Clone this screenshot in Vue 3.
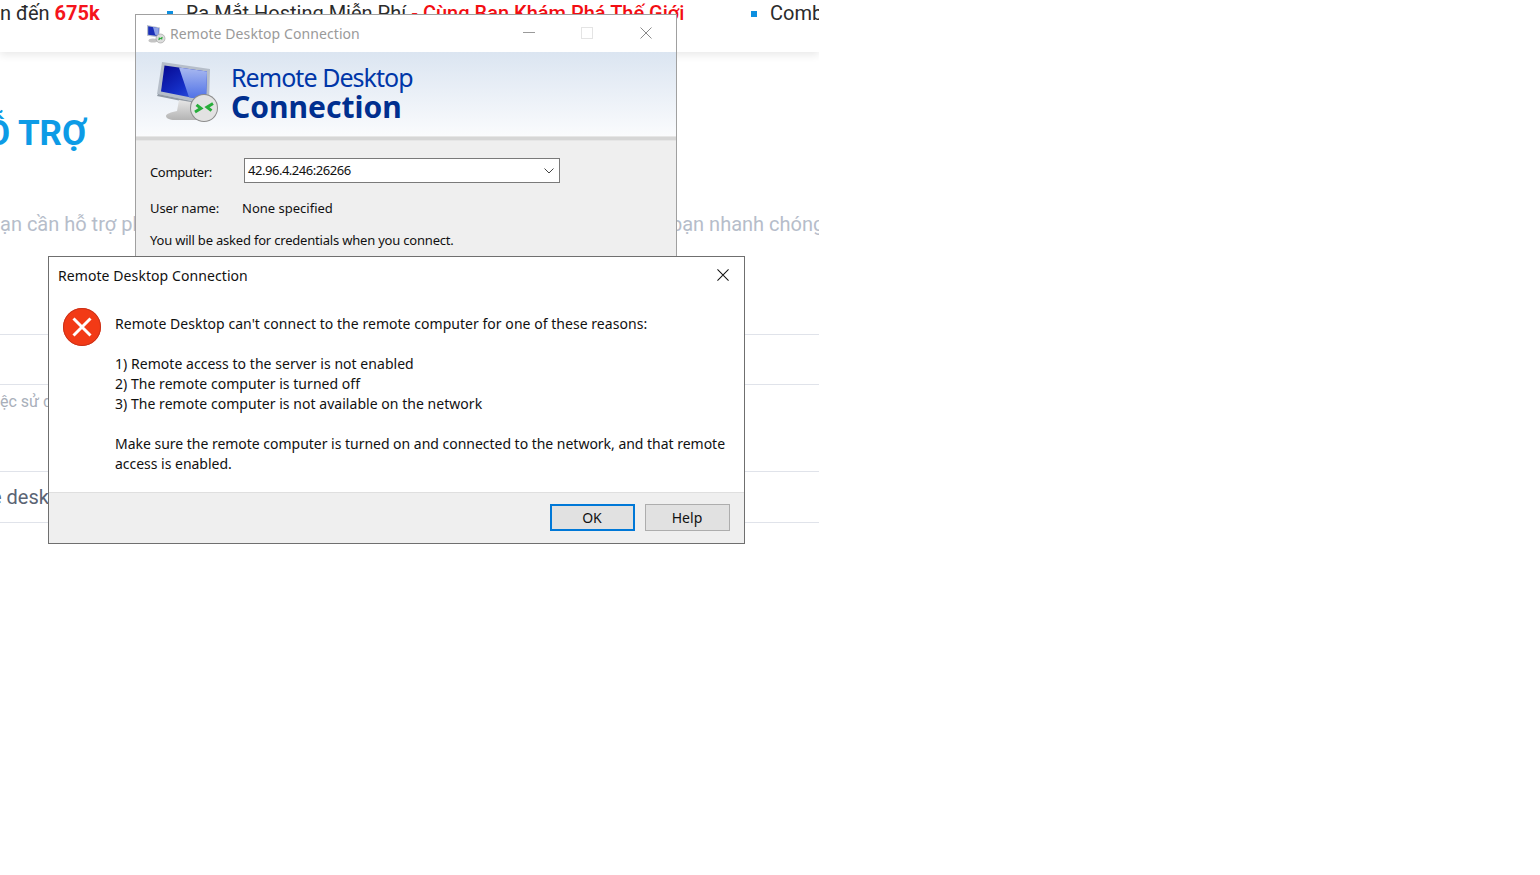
<script setup>
const reasons = [
  '1) Remote access to the server is not enabled',
  '2) The remote computer is turned off',
  '3) The remote computer is not available on the network',
]
</script>

<template>
  <div class="desktop">
    <main class="page">
      <header class="topbar">
        <span class="promo">n đến <b>675k</b></span>
        <span class="bullet first"></span>
        <span class="news">Ra Mắt Hosting Miễn Phí <em>- Cùng Bạn Khám Phá Thế Giới</em></span>
        <span class="bullet second"></span>
        <span class="combo">Combo</span>
      </header>
      <h1 class="heading">Ỗ TRỢ</h1>
      <div class="lead">
        <span>ạn cần hỗ trợ phần</span>
        <span>bạn nhanh chóng</span>
      </div>
      <div class="rule r1"></div>
      <div class="rule r2"></div>
      <div class="usage">ệc sử dụng</div>
      <div class="rule r3"></div>
      <div class="desk">e desktop</div>
      <div class="rule r4"></div>
    </main>

    <section class="rdp">
      <div class="rdp-title">
        <svg class="small-icon" viewBox="0 0 20 20" aria-hidden="true">
          <path d="M1 1l13 2.400-1 10-12-1.700z" fill="#b9c0cc" />
          <path d="M2.200 2.300l10.600 2-.8 7.700-9.800-1.300z" fill="#1a2fb8" />
          <path d="M7 3l5.800 1.200-.7 7-3-.4z" fill="#8fa3e6" />
          <ellipse cx="7" cy="16.500" rx="4.500" ry="2" fill="#c4c4c4" />
          <circle cx="14.500" cy="14.500" r="4.500" fill="#dcdcdc" stroke="#9a9a9a" stroke-width=".6" />
          <path d="M12.500 15.800l1.500-1-1.300-1M16.500 13.200l-1.500 1 1.300 1" fill="none" stroke="#2aa838" stroke-width="1.100" />
        </svg>
        <span class="rdp-caption">Remote Desktop Connection</span>
        <div class="win-controls">
          <svg viewBox="0 0 12 12" aria-hidden="true"><path d="M0 5.500h12" stroke="#9a9a9a" /></svg>
          <svg viewBox="0 0 12 12" aria-hidden="true"><rect x=".5" y=".5" width="11" height="11" fill="none" stroke="#e4e4e4" /></svg>
          <svg viewBox="0 0 12 12" aria-hidden="true"><path d="M.5.500l11 11M11.500.500l-11 11" stroke="#8a8a8a" /></svg>
        </div>
      </div>
      <div class="banner">
        <svg class="big-icon" viewBox="0 0 62 62" aria-hidden="true">
          <defs>
            <linearGradient id="scr" x1="0" y1="0" x2="1" y2="1">
              <stop offset="0" stop-color="#06078f" />
              <stop offset=".55" stop-color="#1530c8" />
              <stop offset="1" stop-color="#3f66e6" />
            </linearGradient>
            <linearGradient id="glare" x1="0" y1="0" x2="0" y2="1">
              <stop offset="0" stop-color="#a9b9f0" />
              <stop offset="1" stop-color="#4a6de6" />
            </linearGradient>
            <linearGradient id="stand" x1="0" y1="0" x2="0" y2="1">
              <stop offset="0" stop-color="#e6e6e6" />
              <stop offset="1" stop-color="#b4b4b4" />
            </linearGradient>
          </defs>
          <path d="M5 0l48 7-1 34-2 1L0 32z" fill="#b6bec9" />
          <path d="M7.500 3.500l42.500 6-1 29L4 29.500z" fill="url(#scr)" />
          <path d="M22 5.500l28 4-1 29-17-3.200z" fill="url(#glare)" />
          <path d="M1 32l48 10v2L0 34z" fill="#8f98a3" />
          <path d="M22 38l12 2 1 8 9 4-4 6H18c-6 0-9-2-9-4s5-4 11-5z" fill="url(#stand)" />
          <circle cx="47" cy="46" r="14" fill="#8c8c8c" />
          <circle cx="47" cy="46" r="13" fill="#e2e2e2" />
          <path d="M38 50l6-3.600-4.500-3.600M56 41.500l-6 3.600 4.500 3.600" fill="none" stroke="#27ad3a" stroke-width="3" />
        </svg>
        <div class="banner-text">
          <div class="banner-top">Remote Desktop</div>
          <div class="banner-bottom">Connection</div>
        </div>
      </div>
      <div class="banner-sep"></div>
      <div class="rdp-body">
        <div class="field-row">
          <label>Computer:</label>
          <div class="combo-box">
            <span>42.96.4.246:26266</span>
            <svg viewBox="0 0 10 6" aria-hidden="true"><path d="M.5.500L5 5l4.500-4.500" fill="none" stroke="#444" /></svg>
          </div>
        </div>
        <div class="user-row">
          <label>User name:</label>
          <span>None specified</span>
        </div>
        <div class="hint">You will be asked for credentials when you connect.</div>
      </div>
    </section>

    <section class="dialog">
      <div class="dialog-title">
        <span>Remote Desktop Connection</span>
        <svg viewBox="0 0 13 13" aria-hidden="true"><path d="M.5.500l12 12M12.500.500l-12 12" stroke="#111" stroke-width="1.100" /></svg>
      </div>
      <div class="dialog-body">
        <svg class="err" viewBox="0 0 38 38" aria-hidden="true">
          <circle cx="19" cy="19" r="19" fill="#f23a16" />
          <circle cx="19" cy="19" r="18.500" fill="none" stroke="#c8321a" />
          <path d="M10.500 10.500l17 17M27.500 10.500l-17 17" stroke="#fff" stroke-width="3" />
        </svg>
        <div class="msg">
          <p class="wide">Remote Desktop can't connect to the remote computer for one of these reasons:</p>
          <p class="group wide"><span v-for="r in reasons" :key="r">{{ r }}</span></p>
          <p class="tight">Make sure the remote computer is turned on and connected to the network, and that remote access is enabled.</p>
        </div>
      </div>
      <div class="dialog-foot">
        <button class="primary">OK</button>
        <button>Help</button>
      </div>
    </section>
  </div>
</template>

<style>
html, body { margin: 0; background: #fff; }
</style>

<style scoped>
.desktop {
  position: relative;
  width: 1540px;
  height: 875px;
  overflow: hidden;
  background: #fff;
  font-family: "Noto Sans", "Open Sans", sans-serif;
}

/* website behind the windows */
.page {
  position: relative;
  width: 819px;
  height: 875px;
  overflow: hidden;
  font-family: Roboto, sans-serif;
  display: flex;
  flex-direction: column;
}
.topbar {
  flex: none;
  height: 52px;
  display: flex;
  align-items: flex-start;
  box-shadow: 0 3px 8px rgba(0, 0, 0, .09);
  font-size: 20px;
  line-height: 24px;
  white-space: nowrap;
  color: #2b2b2b;
  padding-top: 1px;
  box-sizing: border-box;
}
.promo { width: 167px; flex: none; }
.promo b { color: #f5141c; font-weight: 700; }
.bullet { flex: none; width: 6px; height: 6px; background: #0d8fe0; margin-top: 10px; }
.news { width: 565px; flex: none; margin-left: 13px; }
.news em { font-style: normal; font-weight: 500; color: #f30d12; }
.combo { margin-left: 13px; }
.heading {
  margin: 59px 0 0 -14px;
  font-size: 35px;
  line-height: 46px;
  font-weight: 700;
  color: #0d9be6;
  white-space: nowrap;
}
.lead {
  margin-top: 54px;
  display: flex;
  justify-content: space-between;
  width: 840px;
  font-size: 20px;
  line-height: 26px;
  color: #b6bdca;
  white-space: nowrap;
}
.lead span:last-child { width: 146px; margin-left: auto; margin-right: 23px; }
.rule { height: 1px; flex: none; background: #e0e3ea; }
.r1 { margin-top: 97px; }
.r2 { margin-top: 49px; }
.usage {
  height: 86px;
  font-size: 16px;
  line-height: 34px;
  color: #a9afba;
  white-space: nowrap;
}
.desk {
  margin-left: -9px;
  height: 50px;
  font-size: 20px;
  line-height: 50px;
  color: #5b6474;
  white-space: nowrap;
}

/* Remote Desktop Connection window */
.rdp {
  position: absolute;
  left: 135px;
  top: 14px;
  width: 542px;
  height: 300px;
  box-sizing: border-box;
  border: 1px solid #a0a0a0;
  background: #efefef;
  font-size: 13px;
  color: #111;
}
.rdp-title {
  height: 37px;
  background: #fff;
  display: flex;
  align-items: center;
  padding-left: 10px;
  padding-right: 24px;
}
.small-icon { width: 20px; height: 20px; flex: none; margin-top: 1px; }
.rdp-caption { margin-left: 4px; font-size: 14px; color: #9a9a9a; margin-top: -1px; letter-spacing: .08px; }
.win-controls { margin-left: auto; display: flex; margin-top: -1px; }
.win-controls svg { width: 12px; height: 12px; display: block; }
.win-controls svg + svg { margin-left: 46px; }
.win-controls svg:last-child { margin-left: 47px; }
.banner {
  height: 84px;
  background: linear-gradient(#dbe5f1, #fafbfd);
  display: flex;
  padding-left: 21px;
  box-sizing: border-box;
}
.big-icon { width: 62px; height: 62px; margin-top: 10px; flex: none; }
.banner-text { margin-left: 12px; }
.banner-top { font-size: 25px; line-height: 28px; margin-top: 11px; letter-spacing: -.95px; color: #0036a8; }
.banner-bottom { font-size: 30px; line-height: 30px; font-weight: 700; margin-top: 1px; color: #002f8f; }
.banner-sep { height: 5px; box-sizing: border-box; background: #d6d6d6; border-top: 1px solid #e6e6e6; border-bottom: 1px solid #e6e6e6; }
.rdp-body { padding: 17px 0 0 14px; }
.field-row { display: flex; align-items: flex-start; }
.field-row label { width: 94px; line-height: 18px; margin-top: 5px; flex: none; letter-spacing: -.35px; }
.combo-box {
  width: 316px;
  height: 25px;
  box-sizing: border-box;
  background: #fff;
  border: 1px solid #7a7a7a;
  display: flex;
  align-items: center;
  padding: 0 5px 0 3px;
  justify-content: space-between;
}
.combo-box span { letter-spacing: -.47px; padding-bottom: 2px; }
.combo-box svg { width: 10px; height: 6px; }
.user-row { display: flex; margin-top: 16px; line-height: 18px; }
.user-row label { width: 92px; flex: none; letter-spacing: -.1px; }
.hint { margin-top: 14px; line-height: 18px; letter-spacing: -.2px; }

/* Error dialog */
.dialog {
  position: absolute;
  left: 48px;
  top: 256px;
  width: 697px;
  height: 288px;
  box-sizing: border-box;
  border: 1px solid #6f6f6f;
  background: #fff;
  display: flex;
  flex-direction: column;
  font-size: 14px;
  color: #111;
}
.dialog-title {
  height: 37px;
  flex: none;
  display: flex;
  align-items: center;
  justify-content: space-between;
  padding: 0 15px 0 9px;
  line-height: 20px;
  letter-spacing: .08px;
}
.dialog-title svg { width: 12px; height: 12px; margin-top: -1px; }
.dialog-body {
  flex: 1;
  min-height: 0;
  display: flex;
  padding: 13px 0 0 14px;
}
.err { width: 38px; height: 38px; flex: none; margin-top: 1px; }
.msg { margin: 7px 0 0 14px; width: 615px; line-height: 20px; }
.msg p { margin: 0 0 20px; }
.msg p:last-child { margin-bottom: 0; }
.msg .wide { letter-spacing: .04px; }
.msg .tight { letter-spacing: -.02px; }
.group span { display: block; }
.dialog-foot {
  flex: none;
  height: 51px;
  box-sizing: border-box;
  border-top: 1px solid #dfdfdf;
  background: #efefef;
  display: flex;
  justify-content: flex-end;
  gap: 10px;
  padding: 11px 14px 0 0;
}
.dialog-foot button {
  width: 85px;
  height: 27px;
  box-sizing: border-box;
  background: #e1e1e1;
  border: 1px solid #adadad;
  font: 14px "Noto Sans", sans-serif;
  color: #111;
  padding: 0 1px 0 0;
}
.dialog-foot .primary { border: 2px solid #0078d7; }
</style>
